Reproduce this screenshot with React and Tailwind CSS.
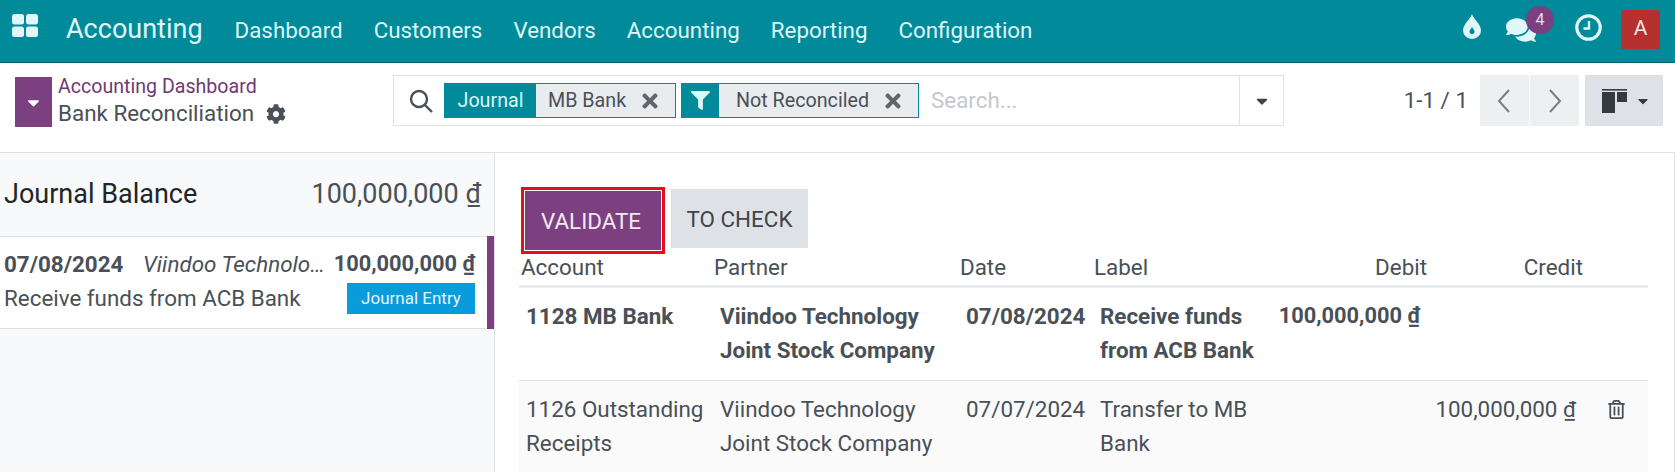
import React from "react";
import { FaCog, FaCaretDown, FaFilter, FaTimes, FaComments, FaRegTrashAlt } from "react-icons/fa";

const cellBase = "align-top px-[7px] pt-[11px] pb-[13px] leading-[34px]";

function Amount({ v }) {
  return <span className="whitespace-nowrap">{v} <span className="underline">₫</span></span>;
}

function NavBar() {
  return (
    <div className="h-[63px] bg-[#018a9a] border-b border-[#02606c] flex items-center text-[#dff7f8] shrink-0">
      <svg className="ml-[12px] -mt-[12px] shrink-0" width="26" height="23" viewBox="0 0 26 23" fill="#dff7f8">
        <rect x="0" y="0" width="12" height="10.5" rx="2.5" /><rect x="14" y="0" width="12" height="10.5" rx="2.5" />
        <rect x="0" y="12.5" width="12" height="10.5" rx="2.5" /><rect x="14" y="12.5" width="12" height="10.5" rx="2.5" />
      </svg>
      <span className="ml-[28px] text-[27px] -mt-[4px]">Accounting</span>
      <nav className="flex ml-[32px] gap-[31px] text-[22.35px] -mt-[1px]">
        <span>Dashboard</span><span>Customers</span><span>Vendors</span><span>Accounting</span><span>Reporting</span><span>Configuration</span>
      </nav>
      <div className="ml-auto flex items-center">
        <svg width="20" height="26" viewBox="0 0 20 26" className="mr-[24px] -mt-[10px]">
          <path fillRule="evenodd" fill="#dff7f8" d="M10 1C11.5 6 19 11 19 17.5A9 8.5 0 0 1 1 17.5C1 11 8.5 6 10 1ZM10 14C9 16 7.5 17 7.5 18.5A2.5 2.5 0 0 0 12.5 18.5C12.5 17 11 16 10 14Z" />
        </svg>
        <div className="relative mr-[39px]">
          <FaComments className="text-[30px] -mt-[2px]" />
          <span className="absolute -top-[11px] left-[20px] w-[28px] h-[28px] rounded-full bg-[#7c4080] text-[#e8dcea] text-[16px] flex items-center justify-center">4</span>
        </div>
        <svg width="27" height="27" viewBox="0 0 27 27" fill="none" stroke="#dff7f8" className="mr-[19px] -mt-[8px]">
          <circle cx="13.5" cy="13.5" r="11.7" strokeWidth="3.2" />
          <path d="M14 7V14.5H8.5" strokeWidth="2.4" />
        </svg>
        <div className="w-[39px] h-[39px] mr-[15px] -mt-[4px] rounded-[3px] bg-[#b5302f] text-[#f5e4e4] text-[21px] flex items-center justify-center">A</div>
      </div>
    </div>
  );
}

function ControlPanel() {
  return (
    <div className="h-[90px] bg-white border-b border-[#dee2e6] flex shrink-0 text-[#495057] text-[22.4px]">
      <div className="flex w-[393px] shrink-0 pl-[15px] pt-[14px]">
        <div className="w-[37px] h-[50px] bg-[#7c4080] flex items-center justify-center text-white text-[19px]"><FaCaretDown /></div>
        <div className="ml-[6px] -mt-[4px] leading-[27px]">
          <div className="text-[#6f3a72] text-[19.6px]">Accounting Dashboard</div>
          <div className="flex items-center">Bank Reconciliation<FaCog className="ml-[12px] text-[20px]" /></div>
        </div>
      </div>
      <div className="mt-[12px] w-[891px] h-[51px] border border-[#dee2e6] flex items-center">
        <svg width="24" height="24" viewBox="0 0 24 24" fill="none" stroke="#495057" strokeWidth="2.4" className="ml-[15px] mr-[11px] shrink-0">
          <circle cx="10" cy="10" r="8" /><path d="M15.8 15.8L23 23" />
        </svg>
        <Facet label={<span className="px-[14px]">Journal</span>} value="MB Bank" w="w-[232px]" lw="w-[91px]" pl="pl-[12px]" />
        <Facet label={<FaFilter className="text-[19px]" />} value="Not Reconciled" w="w-[238px]" lw="w-[37px]" pl="pl-[17px]" extra="ml-[5px]" />
        <span className="ml-[12px] text-[#c4c8cc]">Search...</span>
        <div className="ml-auto w-[44px] h-full border-l border-[#dee2e6] flex items-center justify-center text-[#3f444a] text-[18px]"><FaCaretDown /></div>
      </div>
      <div className="flex items-start mt-[12px] ml-auto mr-[12px]">
        <span className="mr-[12px] mt-[9px] text-[#4c5157]">1-1 / 1</span>
        <PagerBtn d="M14 1L4 12L14 23" />
        <PagerBtn d="M5 1L15 12L5 23" extra="ml-[1px]" />
        <div className="ml-[6px] w-[78px] h-[51px] bg-[#dee2e6] flex items-center justify-center gap-[8px] pl-[4px]">
          <svg width="25" height="24" viewBox="0 0 25 24" fill="#343a40">
            <rect x="0" y="0" width="25" height="1.6" /><rect x="0" y="3" width="13" height="21" /><rect x="15" y="3" width="10" height="10" />
          </svg>
          <FaCaretDown className="text-[#343a40] text-[16px]" />
        </div>
      </div>
    </div>
  );
}

function PagerBtn({ d, extra = "" }) {
  return (
    <div className={"w-[49px] h-[51px] bg-[#eeeff1] flex items-center justify-center " + extra}>
      <svg width="19" height="24" viewBox="0 0 19 24" fill="none" stroke="#7a7f85" strokeWidth="2"><path d={d} /></svg>
    </div>
  );
}

function Facet({ label, value, w, lw, pl, extra = "" }) {
  return (
    <div className={"h-[35px] flex border border-[#018a9a] bg-[#e9ecef] shrink-0 text-[19.7px] " + w + " " + extra}>
      <div className={"bg-[#018a9a] text-[#dff7f8] flex items-center justify-center shrink-0 " + lw}>{label}</div>
      <div className={"flex-1 flex items-center justify-between pr-[14px] " + pl}>
        <span>{value}</span>
        <FaTimes className="text-[#5f656b] text-[22px]" />
      </div>
    </div>
  );
}

function LeftPanel() {
  return (
    <div className="w-[495px] shrink-0 bg-[#f8f9fa] border-r border-[#dee2e6] text-[#495057] text-[22.4px]">
      <div className="h-[83px] flex items-center justify-between pl-[4px] pr-[13px]">
        <span className="text-[27px] text-[#212529]">Journal Balance</span>
        <span className="text-[27px]"><Amount v="100,000,000" /></span>
      </div>
      <div className="h-[93px] bg-white border-y border-[#dee2e6] flex">
        <div className="flex-1 min-w-0 pl-[4px] pr-[12px] pt-[10px]">
          <div className="flex items-center leading-[34px]">
            <span className="font-bold w-[139px] shrink-0">07/08/2024</span>
            <span className="italic truncate flex-1 min-w-0">Viindoo Technology Joint Stock Company</span>
            <span className="font-bold ml-[4px] shrink-0 text-[21.8px]"><Amount v="100,000,000" /></span>
          </div>
          <div className="flex items-center justify-between mt-[1px]">
            <span>Receive funds from ACB Bank</span>
            <span className="w-[128px] h-[31px] bg-[#0a9bdc] text-[#e6f6fc] text-[17px] flex items-center justify-center">Journal Entry</span>
          </div>
        </div>
        <div className="w-[7px] bg-[#7c4080] shrink-0 -my-px" />
      </div>
    </div>
  );
}

function RightPanel() {
  const heads = ["Account", "Partner", "Date", "Label", "Debit", "Credit", ""];
  return (
    <div className="flex-1 min-w-0 bg-white pl-[24px] pr-[25px] border-r border-[#dee2e6] text-[#495057] text-[22.4px] overflow-hidden">
      <div className="flex items-start mt-[34px] ml-[2px]">
        <div className="w-[144px] h-[67px] border-[3px] border-[#e3101c] p-[1px]">
          <div className="w-full h-full bg-[#7c4080] text-[#f1e8f2] flex items-center justify-center pt-[2px] pr-[4px]">VALIDATE</div>
        </div>
        <div className="ml-[6px] mt-[2px] w-[137px] h-[59px] bg-[#dee2e6] text-[#3f444a] flex items-center justify-center pt-[3px]">TO CHECK</div>
      </div>
      <table className="table-fixed w-[1129px] border-collapse">
        <colgroup>
          <col className="w-[194px]" /><col className="w-[246px]" /><col className="w-[134px]" /><col className="w-[175px]" /><col className="w-[159px]" /><col className="w-[156px]" /><col className="w-[65px]" />
        </colgroup>
        <thead>
          <tr className="border-b-[3px] border-[#e9ecef]">
            {heads.map((h, i) => (
              <th key={i} className={"font-normal pr-0 pb-[4px] leading-[27px] " + (i === 0 ? "pl-[2px] " : "pl-[1px] ") + (i === 4 || i === 5 ? "text-right" : "text-left")}>{h}</th>
            ))}
          </tr>
        </thead>
        <tbody>
          <tr className="border-b border-[#dee2e6] font-bold">
            <td className={cellBase}>1128 MB Bank</td>
            <td className={cellBase}>Viindoo Technology Joint Stock Company</td>
            <td className={cellBase}>07/08/2024</td>
            <td className={cellBase}>Receive funds from ACB Bank</td>
            <td className={cellBase + " text-right text-[21.8px]"}><Amount v="100,000,000" /></td>
            <td className={cellBase}></td>
            <td className={cellBase}></td>
          </tr>
          <tr className="bg-[#fafafa]">
            <td className={cellBase}>1126 Outstanding Receipts</td>
            <td className={cellBase}>Viindoo Technology Joint Stock Company</td>
            <td className={cellBase}>07/07/2024</td>
            <td className={cellBase}>Transfer to MB Bank</td>
            <td className={cellBase}></td>
            <td className={cellBase + " text-right"}><Amount v="100,000,000" /></td>
            <td className={cellBase}><FaRegTrashAlt className="ml-[17px] mt-[8px] text-[19px]" /></td>
          </tr>
        </tbody>
      </table>
    </div>
  );
}

export default function App() {
  return (
    <div className="w-[1675px] h-[472px] overflow-hidden flex flex-col bg-white font-['Roboto',sans-serif]">
      <NavBar />
      <ControlPanel />
      <div className="flex flex-1 min-h-0">
        <LeftPanel />
        <RightPanel />
      </div>
    </div>
  );
}
